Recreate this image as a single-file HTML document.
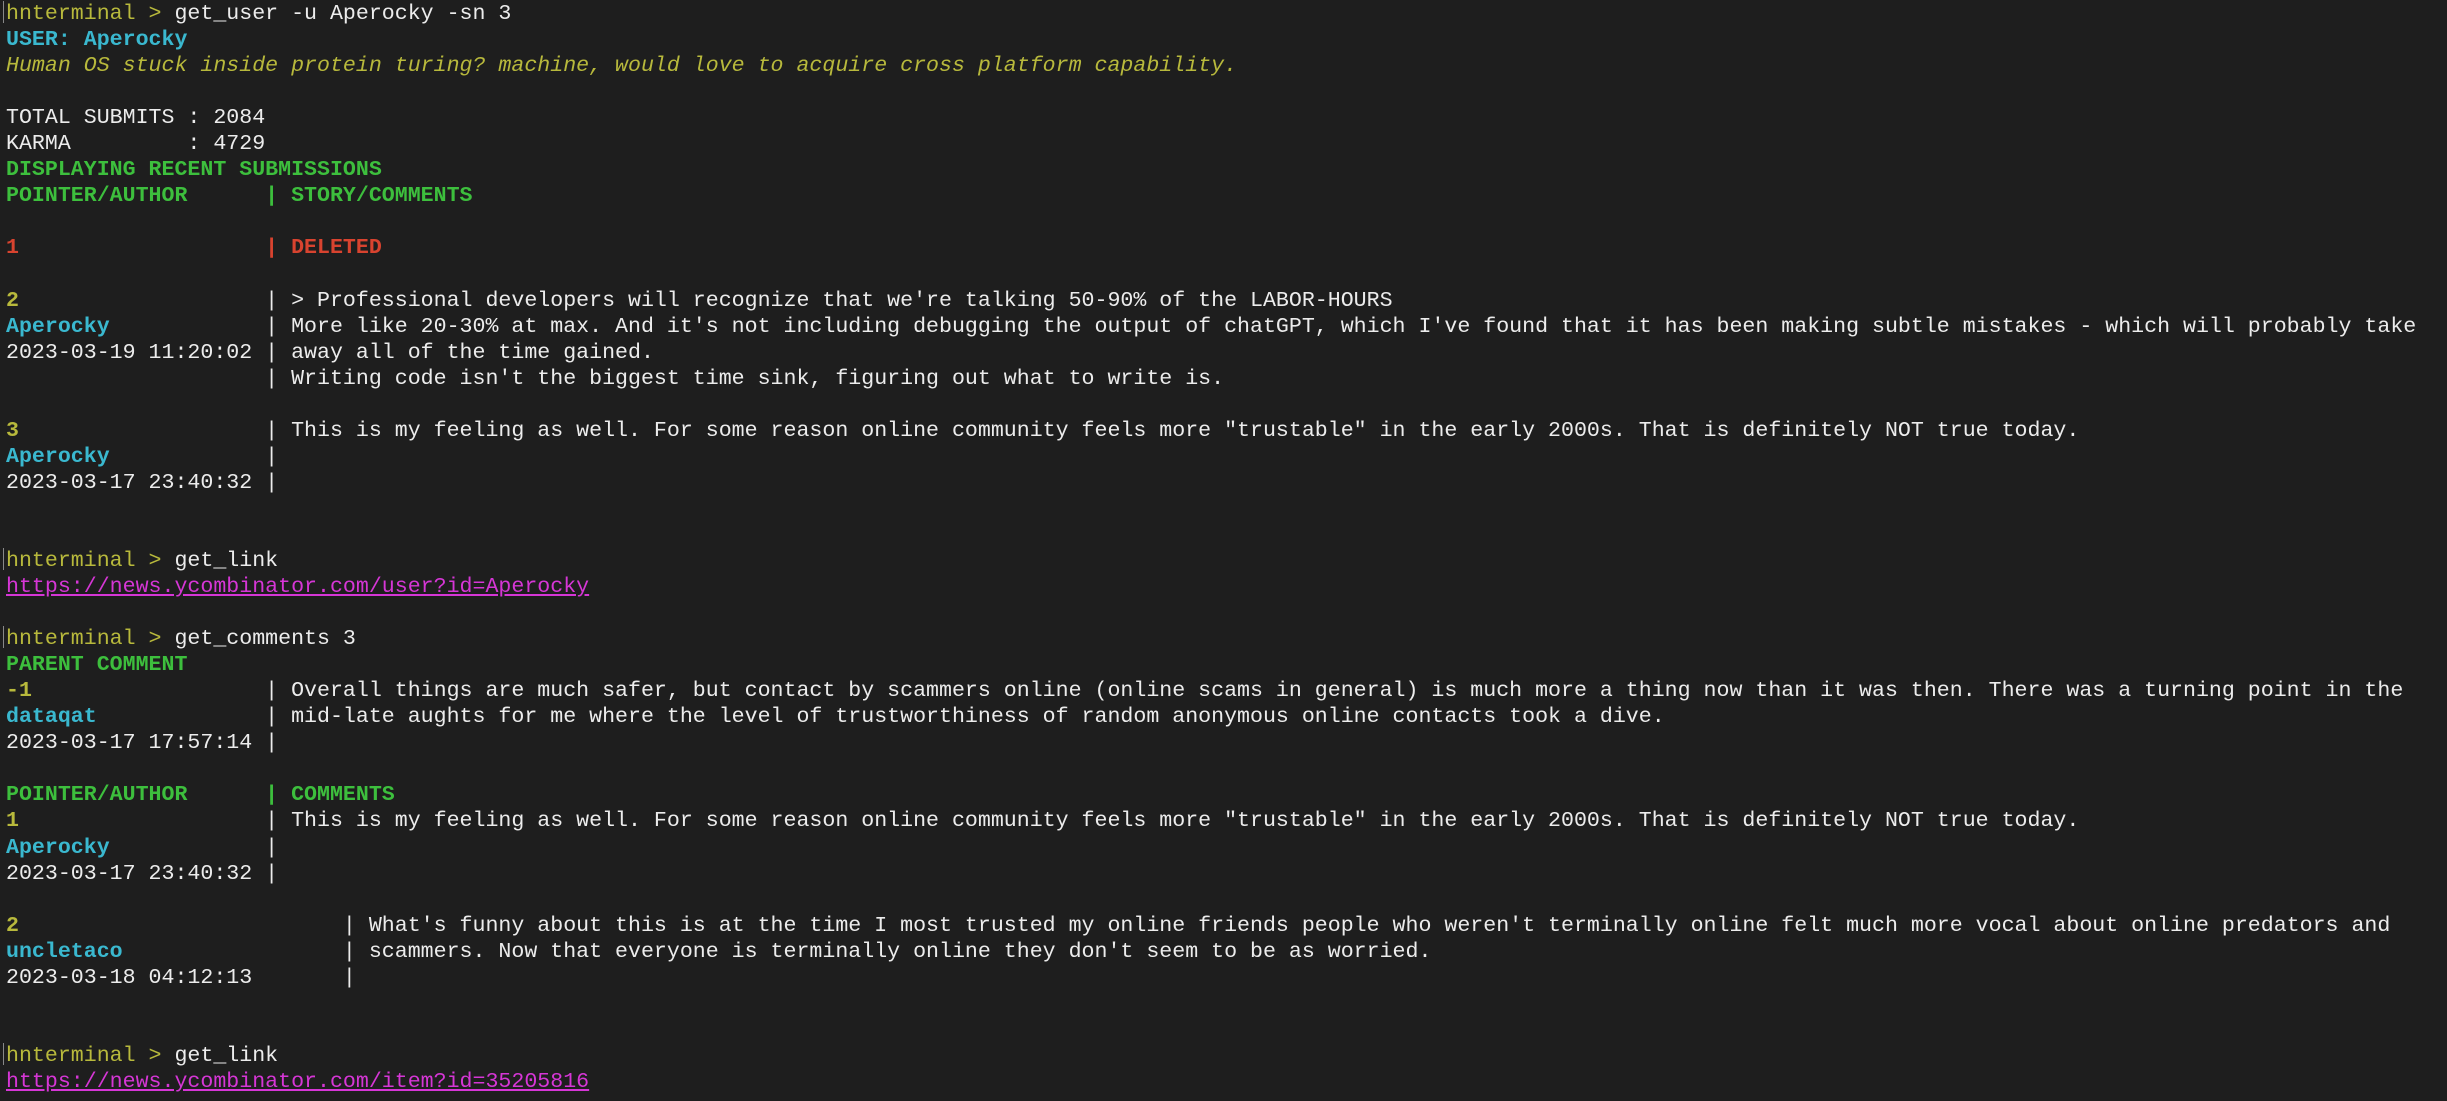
<!DOCTYPE html>
<html><head><meta charset="utf-8"><style>
html,body{margin:0;padding:0;background:#1e1e1e;width:2447px;height:1101px;overflow:hidden}
pre{margin:0;padding:1px 0 0 6px;font-family:"Liberation Mono",monospace;font-size:21.6px;line-height:26.04px;color:#ececec;white-space:pre}
.y{color:#b8b93c}.c{color:#3ab8cf;font-weight:bold}.g{color:#3dbf3d;font-weight:bold}.r{color:#d8432f;font-weight:bold}
.yb{color:#b8b93c;font-weight:bold}.i{color:#b8b93c;font-style:italic}.m{color:#d636d6;text-decoration:underline}
.cur{display:inline-block;width:0;border-left:1px solid #888;height:22px;vertical-align:-4px;margin-left:-3px;margin-right:2px}
</style></head><body><pre><span class="cur"></span><span class="y">hnterminal &gt; </span>get_user -u Aperocky -sn 3
<span class="c">USER: Aperocky</span>
<span class="i">Human OS stuck inside protein turing? machine, would love to acquire cross platform capability.</span>

TOTAL SUBMITS : 2084
KARMA         : 4729
<span class="g">DISPLAYING RECENT SUBMISSIONS</span>
<span class="g">POINTER/AUTHOR      | STORY/COMMENTS</span>

<span class="r">1                   | DELETED</span>

<span class="yb">2</span>                   | &gt; Professional developers will recognize that we're talking 50-90% of the LABOR-HOURS
<span class="c">Aperocky</span>            | More like 20-30% at max. And it's not including debugging the output of chatGPT, which I've found that it has been making subtle mistakes - which will probably take
2023-03-19 11:20:02 | away all of the time gained.
                    | Writing code isn't the biggest time sink, figuring out what to write is.

<span class="yb">3</span>                   | This is my feeling as well. For some reason online community feels more "trustable" in the early 2000s. That is definitely NOT true today.
<span class="c">Aperocky</span>            |
2023-03-17 23:40:32 |


<span class="cur"></span><span class="y">hnterminal &gt; </span>get_link
<span class="m">https://news.ycombinator.com/user?id=Aperocky</span>

<span class="cur"></span><span class="y">hnterminal &gt; </span>get_comments 3
<span class="g">PARENT COMMENT</span>
<span class="yb">-1</span>                  | Overall things are much safer, but contact by scammers online (online scams in general) is much more a thing now than it was then. There was a turning point in the
<span class="c">dataqat</span>             | mid-late aughts for me where the level of trustworthiness of random anonymous online contacts took a dive.
2023-03-17 17:57:14 |

<span class="g">POINTER/AUTHOR      | COMMENTS</span>
<span class="yb">1</span>                   | This is my feeling as well. For some reason online community feels more "trustable" in the early 2000s. That is definitely NOT true today.
<span class="c">Aperocky</span>            |
2023-03-17 23:40:32 |

<span class="yb">2</span>                         | What's funny about this is at the time I most trusted my online friends people who weren't terminally online felt much more vocal about online predators and
<span class="c">uncletaco</span>                 | scammers. Now that everyone is terminally online they don't seem to be as worried.
2023-03-18 04:12:13       |


<span class="cur"></span><span class="y">hnterminal &gt; </span>get_link
<span class="m">https://news.ycombinator.com/item?id=35205816</span>
</pre></body></html>
